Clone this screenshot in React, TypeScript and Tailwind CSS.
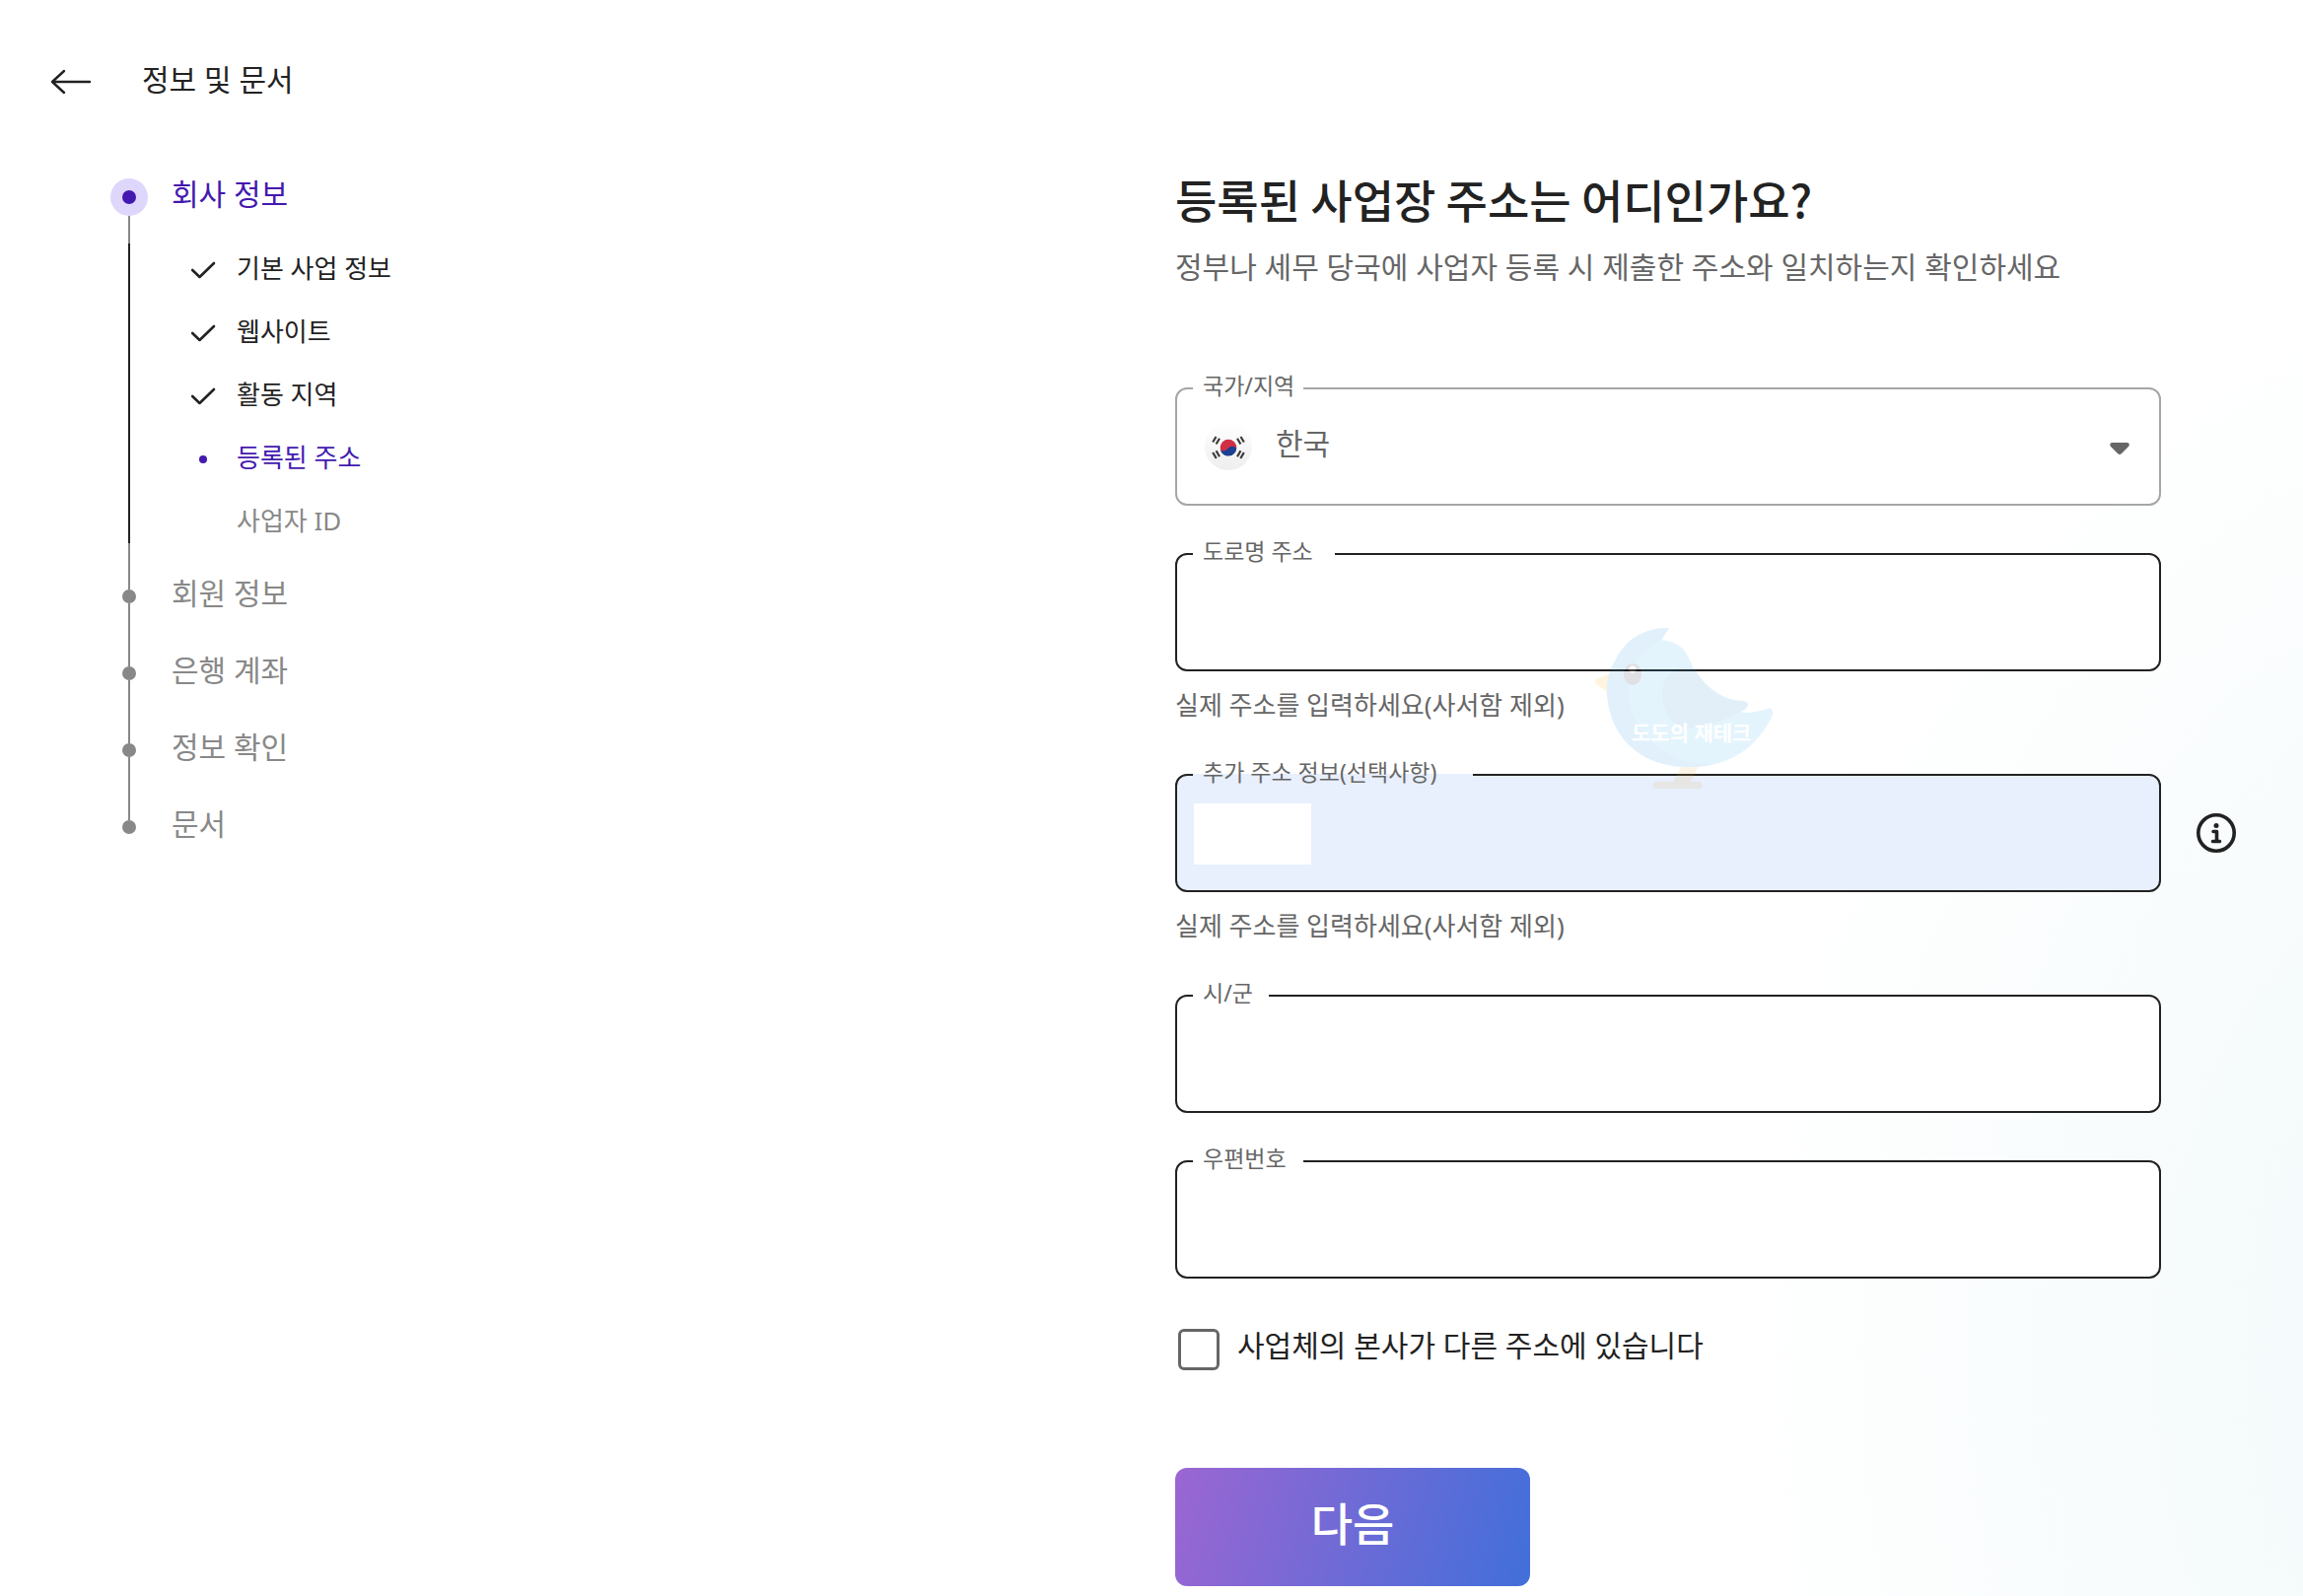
import React from "react";

type SubStepState = "done" | "active" | "pending";

const subSteps: { label: string; state: SubStepState }[] = [
  { label: "기본 사업 정보", state: "done" },
  { label: "웹사이트", state: "done" },
  { label: "활동 지역", state: "done" },
  { label: "등록된 주소", state: "active" },
  { label: "사업자 ID", state: "pending" },
];

const nextSteps = ["회원 정보", "은행 계좌", "정보 확인", "문서"];

const subStepColors: Record<SubStepState, string> = {
  done: "text-[#222222]",
  active: "text-[#4319af]",
  pending: "text-[#888888]",
};

const SubStepIcon: React.FC<{ state: SubStepState }> = ({ state }) => {
  if (state === "done") {
    return (
      <svg viewBox="0 0 26 20" className="h-5 w-[26px]" fill="none">
        <path
          d="M2.2 10L9.5 17L24 3"
          stroke="currentColor"
          strokeWidth="2.6"
          strokeLinecap="round"
          strokeLinejoin="round"
        />
      </svg>
    );
  }
  if (state === "active") {
    return <span className="size-2 rounded-full bg-current" />;
  }
  return null;
};

const Sidebar: React.FC = () => (
  <nav aria-label="진행 단계" className="w-[600px] shrink-0 pl-28">
    <div className="flex h-[38px] items-center">
      <span className="flex size-[38px] items-center justify-center rounded-full bg-[#dfd6fc]">
        <span className="size-3.5 rounded-full bg-[#4319af]" />
      </span>
      <a
        href="#company"
        className="ml-6 pb-1.5 text-[30px] leading-9 text-[#4319af]"
      >
        회사 정보
      </a>
    </div>

    <div className="flex">
      <div className="flex w-[38px] flex-col items-center">
        <span className="h-7 w-0.5 bg-[#888888]" />
        <span className="h-[304px] w-0.5 bg-[#222222]" />
        <span className="w-0.5 flex-1 bg-[#888888]" />
      </div>
      <ul className="flex flex-col pt-[23px] pb-1 pl-9">
        {subSteps.map((step) => (
          <li
            key={step.label}
            className={`flex h-16 items-center ${subStepColors[step.state]}`}
          >
            <span className="mr-3.5 flex w-10 justify-center">
              <SubStepIcon state={step.state} />
            </span>
            <span className="pb-1 text-[26px] leading-8">{step.label}</span>
          </li>
        ))}
      </ul>
    </div>

    {nextSteps.map((label, i) => (
      <div key={label} className="flex h-[78px]">
        <div className="flex w-[38px] flex-col items-center">
          <span className="w-0.5 flex-1 bg-[#888888]" />
          <span className="size-3.5 rounded-full bg-[#888888]" />
          <span
            className={`w-0.5 flex-1 ${i < nextSteps.length - 1 ? "bg-[#888888]" : ""}`}
          />
        </div>
        <span className="ml-6 self-center pb-1.5 text-[30px] leading-9 text-[#888888]">
          {label}
        </span>
      </div>
    ))}
  </nav>
);

interface OutlinedFieldProps {
  id: string;
  label: string;
  notch: string;
  frame?: string;
  helper?: string;
  children: React.ReactNode;
}

// The legend opens the gap in the outline, so each field passes its own notch width
const OutlinedField: React.FC<OutlinedFieldProps> = ({
  id,
  label,
  notch,
  frame = "border-[#222222] bg-white",
  helper,
  children,
}) => (
  <div>
    <fieldset className={`rounded-xl border-2 ${frame}`}>
      <legend
        className={`ml-4 pb-1.5 pl-2.5 text-[23px] leading-5 whitespace-nowrap text-[#666666] ${notch}`}
      >
        <label htmlFor={id}>{label}</label>
      </legend>
      <div className="flex h-[104px]">{children}</div>
    </fieldset>
    {helper && (
      <p
        id={`${id}-helper`}
        className="pt-4 pb-1 text-[26px] leading-9 text-[#666666]"
      >
        {helper}
      </p>
    )}
  </div>
);

const inputStyles =
  "min-w-0 flex-1 bg-transparent px-6 pb-4 text-[30px] text-[#222222] outline-none";

const KoreaFlag: React.FC = () => (
  <svg viewBox="0 0 48 48" className="size-12 shrink-0">
    <defs>
      <linearGradient id="flag-bg" x1="0" y1="0" x2="0" y2="1">
        <stop offset="0" stopColor="#ffffff" />
        <stop offset="1" stopColor="#eeeeee" />
      </linearGradient>
    </defs>
    <circle cx="24" cy="24" r="24" fill="url(#flag-bg)" />
    <circle cx="24" cy="25" r="8.3" fill="#d02f44" />
    <path
      d="M15.8 27C18 29.5 21.5 28.5 24 25.5C26.5 23 30 23 32.2 26A8.3 8.3 0 0 1 15.8 27Z"
      fill="#1c4093"
    />
    <g stroke="#3a3a3a" strokeWidth="2.2">
      <path d="M8.2 19.5L11.5 14M11.6 21.5L15 15.8" />
      <path d="M39.8 19.5L36.5 14M36.4 21.5L33 15.8" />
      <path d="M8.2 30L11.7 36M11.6 28.2L15 34.2" />
      <path d="M39.8 30L36.3 36M36.4 28.2L33 34.2" />
    </g>
  </svg>
);

const BirdMark: React.FC = () => (
  <div className="pointer-events-none absolute top-[635px] left-[1616px] h-[168px] w-[184px]">
    <svg viewBox="0 0 184 168" className="absolute inset-0 opacity-[0.12]">
      <path d="M17 48L3 54Q0 56 3 59L15 67Z" fill="#ffb300" />
      <path
        d="M90 142L81 158H64a3 3 0 0 0 0 7H107a3 3 0 0 0 0-7H99L107 142H98L88 158L98 142Z"
        fill="#e6a83c"
      />
      <path
        d="M77 2C50 2 33 15 24 32C16 45 13 58 14 68C17 115 50 143 97 143C138 144 168 122 182 90Q183 82 176 84Q166 88 152 88L141 76C134 74 129 72 124 68C112 58 107 51 102 43C98 35 96 29 91 23Q82 15 69 14Z"
        fill="#22a9f5"
      />
      <path
        d="M77 2C50 2 33 15 24 32C16 45 13 58 14 68C17 115 50 143 97 143Q112 143 124 139C106 141 92 138 81 132C52 118 36 94 36 65Q37 30 69 14Z"
        fill="#128ce0"
      />
      <path
        d="M102 43C85 37 70 51 70 70C71 92 84 104 103 104C118 103 140 92 155 84Q160 77 152 76C131 76 113 61 102 43Z"
        fill="#1a80d0"
      />
      <ellipse cx="40" cy="49" rx="9" ry="11" fill="#140c28" />
      <circle cx="40" cy="44" r="3.5" fill="#ffffff" />
    </svg>
    <span className="absolute top-[94px] left-[39px] text-[21px] leading-7 font-bold whitespace-nowrap text-white">
      도도의 재테크
    </span>
  </div>
);

const App: React.FC = () => {
  return (
    <div className="relative min-h-screen bg-[radial-gradient(35%_70%_at_110%_85%,#f1f9fa_0%,#f6fbfc_40%,#ffffff_100%)] font-['Noto_Sans','Noto_Sans_CJK_KR',sans-serif] text-[#222222]">
      <header className="flex h-[162px] items-center pt-1 pl-[50px]">
        <button type="button" aria-label="뒤로">
          <svg viewBox="0 0 44 28" className="h-7 w-11" fill="none">
            <path
              d="M15 3L3 14L15 25M3 14H41"
              stroke="currentColor"
              strokeWidth="2.4"
              strokeLinecap="round"
              strokeLinejoin="round"
            />
          </svg>
        </button>
        <h1 className="ml-[50px] pb-1 text-[30px] leading-9">정보 및 문서</h1>
      </header>

      <div className="flex justify-between pt-[19px] pr-[68px]">
        <Sidebar />

        <form
          className="w-[1076px]"
          onSubmit={(event) => event.preventDefault()}
        >
          <div className="w-[1000px]">
            <h2 className="font-['Noto_Sans_CJK_KR',sans-serif] text-[46px] leading-10 font-medium">
              등록된 사업장 주소는 어디인가요?
            </h2>
            <p className="mt-8 mb-[92px] text-[30px] leading-9 whitespace-nowrap text-[#666666]">
              정부나 세무 당국에 사업자 등록 시 제출한 주소와 일치하는지
              확인하세요
            </p>
          </div>

          <div className="flex flex-col gap-9">
            <div className="w-[1000px]">
              <OutlinedField
                id="country"
                label="국가/지역"
                notch="w-28"
                frame="border-[#a6a6a6] bg-white"
              >
                <div className="flex flex-1 items-center pr-[30px] pb-3 pl-7">
                  <KoreaFlag />
                  <select
                    id="country"
                    className="ml-6 h-16 flex-1 appearance-none bg-transparent pb-2 text-[30px] text-[#666666] outline-none"
                  >
                    <option>한국</option>
                  </select>
                  <svg viewBox="0 0 20 12" className="mt-1 h-3 w-5">
                    <path
                      d="M2 0H18Q21 1 19 4L12 11Q10 13 8 11L1 4Q-1 1 2 0Z"
                      fill="#666666"
                    />
                  </svg>
                </div>
              </OutlinedField>
            </div>

            <div className="w-[1000px]">
              <OutlinedField
                id="street"
                label="도로명 주소"
                notch="w-36"
                helper="실제 주소를 입력하세요(사서함 제외)"
              >
                <input
                  id="street"
                  type="text"
                  aria-describedby="street-helper"
                  className={inputStyles}
                />
              </OutlinedField>
            </div>

            <div className="flex justify-between">
              <div className="w-[1000px]">
                <OutlinedField
                  id="extra"
                  label="추가 주소 정보(선택사항)"
                  notch="w-[284px]"
                  frame="border-[#222222] bg-[#e8effd]"
                  helper="실제 주소를 입력하세요(사서함 제외)"
                >
                  <span className="mt-4 ml-[17px] h-[62px] w-[119px] bg-white" />
                  <input
                    id="extra"
                    type="text"
                    aria-describedby="extra-helper"
                    className={inputStyles}
                  />
                </OutlinedField>
              </div>
              <button
                type="button"
                aria-label="도움말"
                className="mt-[52px] size-10"
              >
                <svg viewBox="0 0 40 40" className="size-10" fill="none">
                  <circle
                    cx="20"
                    cy="20"
                    r="18.2"
                    stroke="currentColor"
                    strokeWidth="3.6"
                  />
                  <circle cx="20" cy="12.5" r="2.5" fill="currentColor" />
                  <path
                    d="M17 18.5H20.5V28.5M16.5 28.5H23.5"
                    stroke="currentColor"
                    strokeWidth="3.6"
                    strokeLinecap="round"
                    strokeLinejoin="round"
                  />
                </svg>
              </button>
            </div>

            <div className="w-[1000px]">
              <OutlinedField id="city" label="시/군" notch="w-[77px]">
                <input id="city" type="text" className={inputStyles} />
              </OutlinedField>
            </div>

            <div className="w-[1000px]">
              <OutlinedField id="postal" label="우편번호" notch="w-28">
                <input id="postal" type="text" className={inputStyles} />
              </OutlinedField>
            </div>
          </div>

          <div className="mt-[51px] flex items-center gap-[18px] pl-[3px]">
            <input
              id="other-office"
              type="checkbox"
              className="size-[42px] appearance-none rounded-md border-3 border-[#666666] bg-white"
            />
            <label
              htmlFor="other-office"
              className="pb-2 text-[30px] leading-[34px]"
            >
              사업체의 본사가 다른 주소에 있습니다
            </label>
          </div>

          <button
            type="submit"
            className="mt-[99px] mb-2.5 h-[120px] w-[360px] rounded-xl bg-linear-[105deg,#9b66d2,#416fda] pb-2 text-[46px] leading-[60px] font-medium text-white"
          >
            다음
          </button>
        </form>
      </div>

      <BirdMark />
    </div>
  );
};

export default App;
